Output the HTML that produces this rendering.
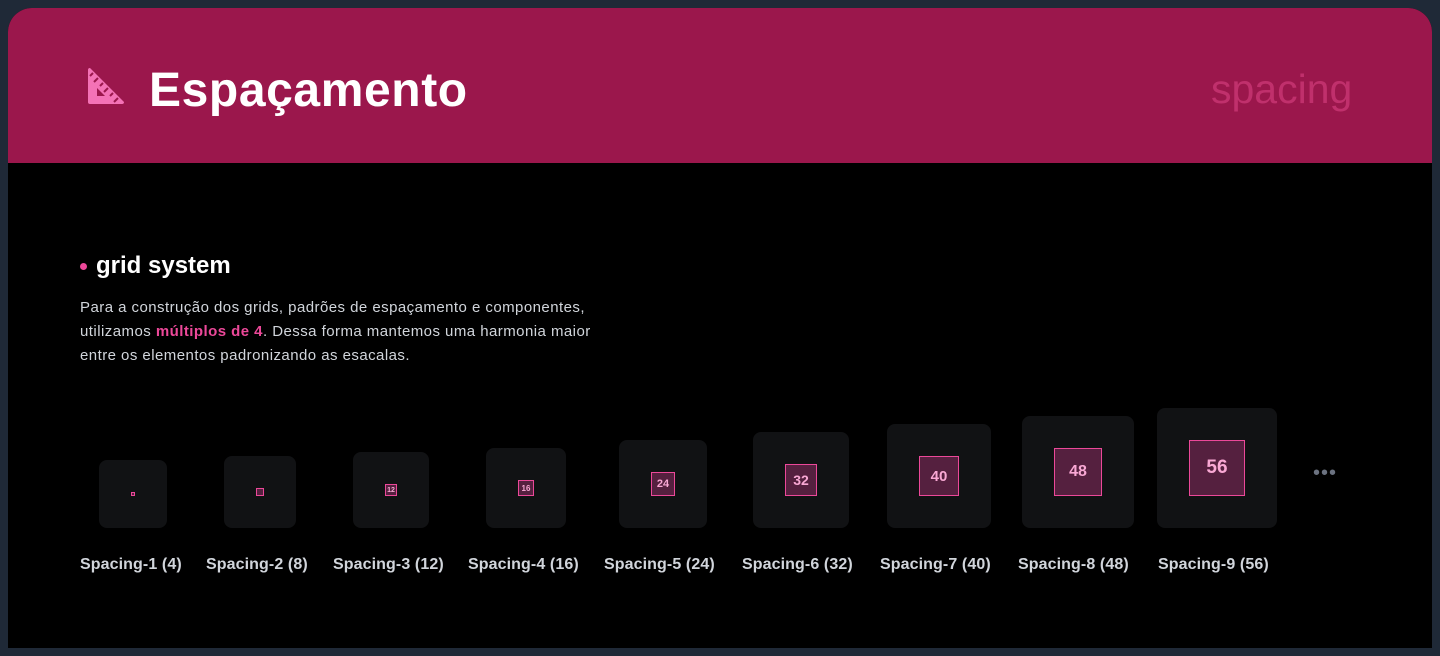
<!DOCTYPE html>
<html><head><meta charset="utf-8"><style>
*{margin:0;padding:0;box-sizing:border-box}
body{width:1440px;height:656px;background:#1f2937;overflow:hidden;font-family:"Liberation Sans",sans-serif;position:relative}
.card{position:absolute;left:8px;top:8px;width:1424px;height:640px;background:#000;border-radius:24px 24px 0 0;overflow:hidden}
.hdr{position:absolute;left:0;top:0;width:1424px;height:155px;background:#9b174c}
.t{position:absolute;left:141px;top:55px;font-size:48px;font-weight:bold;color:#fff;letter-spacing:0.6px}
.sp{position:absolute;left:1203px;top:58px;font-size:41px;color:#c0306c}
.h2{position:absolute;left:88px;top:244px;font-size:24px;font-weight:bold;color:#fff}
.dot{position:absolute;left:72px;top:255px;width:7px;height:7px;border-radius:50%;background:#ec4899}
.p{position:absolute;left:72px;top:288px;font-size:15px;line-height:24px;color:#d1d5db;width:600px;letter-spacing:0.45px}
.p b{color:#ec4899}
.box{position:absolute;background:#111214;border-radius:8px;bottom:120px}
.in{position:absolute;left:32px;top:32px;background:#55203f;border:1px solid #ec4899;color:#f9a8d4;font-weight:bold;display:flex;align-items:center;justify-content:center}
.lb{position:absolute;top:548px;font-size:16px;font-weight:bold;color:#d1d5db;white-space:nowrap;letter-spacing:0.1px}
.dots{position:absolute;left:1305px;top:454px;color:#6b7280;font-size:20px;letter-spacing:1px}
</style></head><body>
<div class="card">
<div class="hdr">
<svg style="position:absolute;left:80px;top:60px" width="36" height="36" viewBox="0 0 36 36"><path d="M2 0 L36 34 Q36 36 34 36 L2 36 Q0 36 0 34 L0 2 Q0 0 2 0 Z" fill="#f472b6"/><path d="M9 20 L9 28 L17 28 Z" fill="#9b174c"/><g stroke="#9b174c" stroke-width="2"><path d="M5 5 L2 8"/><path d="M10 10 L6 14"/><path d="M15 15 L12 18"/><path d="M20 20 L16 24"/><path d="M25 25 L22 28"/><path d="M30 30 L26 34"/></g></svg>
<div class="t">Espaçamento</div>
<div class="sp">spacing</div>
</div>
<div class="dot"></div>
<div class="h2">grid system</div>
<div class="p">Para a construção dos grids, padrões de espaçamento e componentes,<br>utilizamos <b>múltiplos de 4</b>. Dessa forma mantemos uma harmonia maior<br>entre os elementos padronizando as esacalas.</div>

<div class="box" style="left:91px;width:68px;height:68px"><div class="in" style="width:4px;height:4px"></div></div>
<div class="box" style="left:216px;width:72px;height:72px"><div class="in" style="width:8px;height:8px"></div></div>
<div class="box" style="left:345px;width:76px;height:76px"><div class="in" style="width:12px;height:12px;font-size:7px">12</div></div>
<div class="box" style="left:478px;width:80px;height:80px"><div class="in" style="width:16px;height:16px;font-size:8px">16</div></div>
<div class="box" style="left:611px;width:88px;height:88px"><div class="in" style="width:24px;height:24px;font-size:11px">24</div></div>
<div class="box" style="left:745px;width:96px;height:96px"><div class="in" style="width:32px;height:32px;font-size:14px">32</div></div>
<div class="box" style="left:879px;width:104px;height:104px"><div class="in" style="width:40px;height:40px;font-size:15px">40</div></div>
<div class="box" style="left:1014px;width:112px;height:112px"><div class="in" style="width:48px;height:48px;font-size:16px">48</div></div>
<div class="box" style="left:1149px;width:120px;height:120px"><div class="in" style="width:56px;height:56px;font-size:19px">56</div></div>
<div class="dots">•••</div>

<div class="lb" style="left:72px">Spacing-1 (4)</div>
<div class="lb" style="left:198px">Spacing-2 (8)</div>
<div class="lb" style="left:325px">Spacing-3 (12)</div>
<div class="lb" style="left:460px">Spacing-4 (16)</div>
<div class="lb" style="left:596px">Spacing-5 (24)</div>
<div class="lb" style="left:734px">Spacing-6 (32)</div>
<div class="lb" style="left:872px">Spacing-7 (40)</div>
<div class="lb" style="left:1010px">Spacing-8 (48)</div>
<div class="lb" style="left:1150px">Spacing-9 (56)</div>
</div>
</body></html>
